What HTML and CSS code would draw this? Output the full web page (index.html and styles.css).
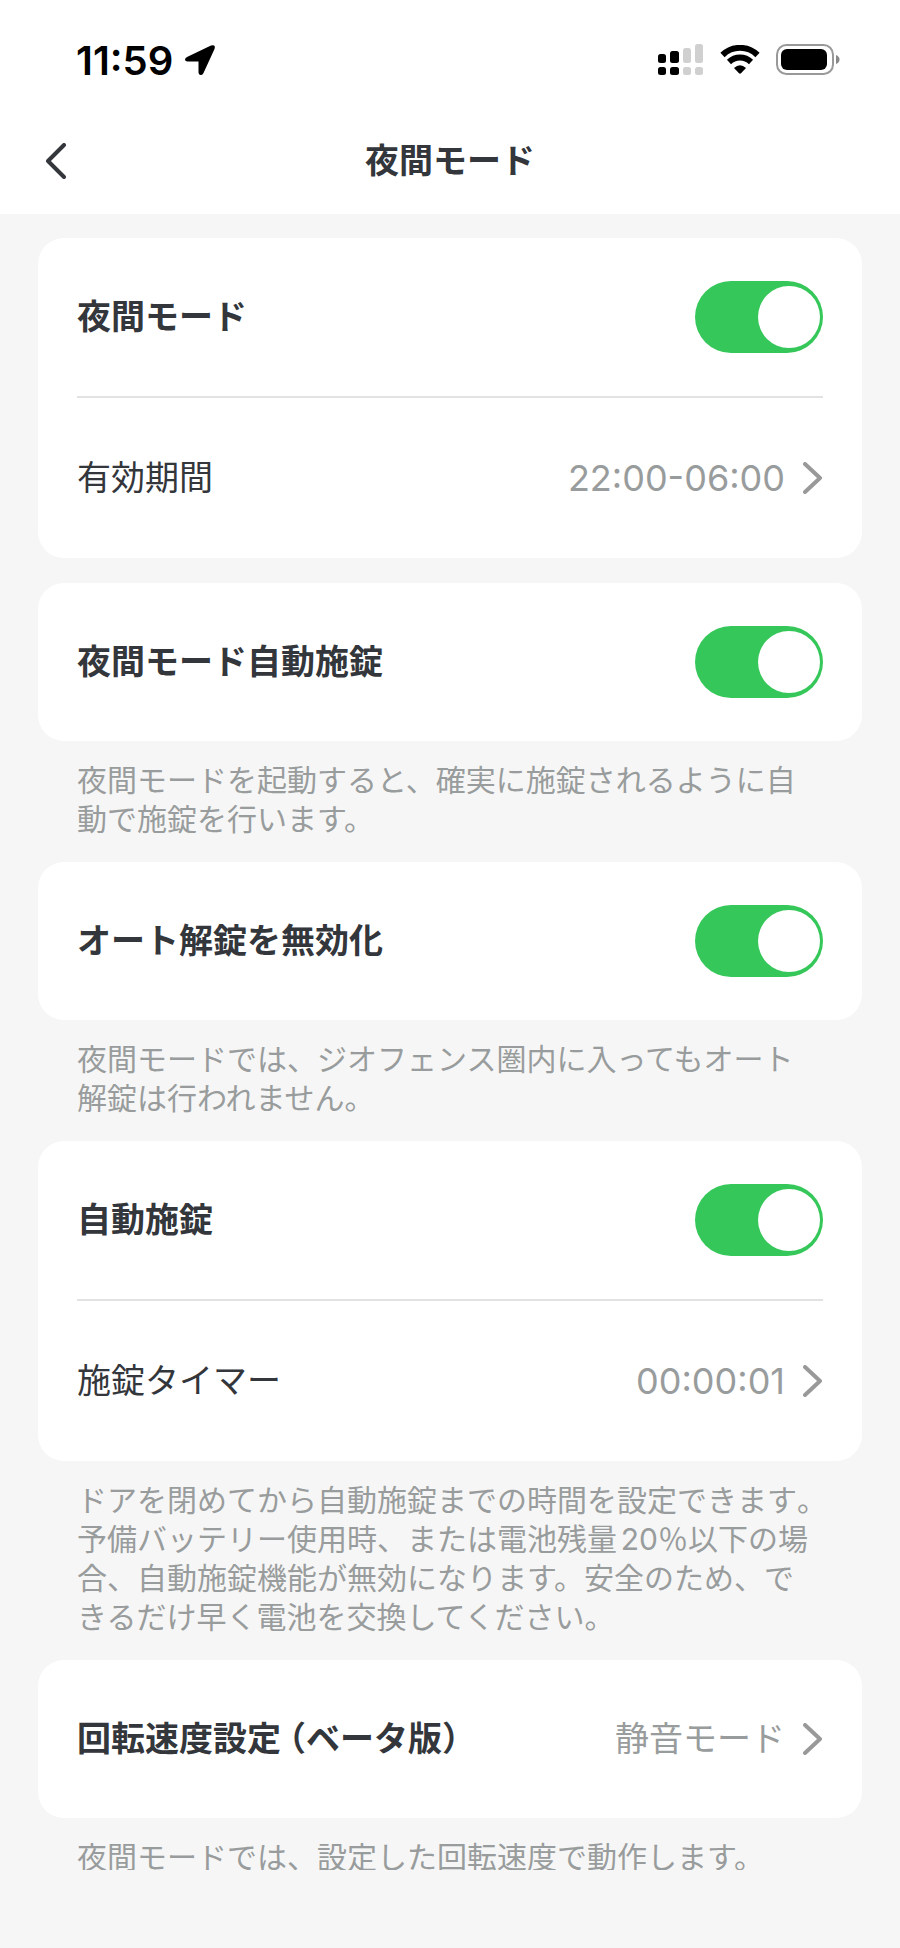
FILE: index.html
```html
<!DOCTYPE html>
<html lang="ja">
<head>
  <meta charset="UTF-8">
  <meta name="viewport" content="width=device-width, initial-scale=1.0">
  <title>夜間モード</title>
  <link rel="stylesheet" href="styles.css">
</head>
<body>
  <div class="status-bar">
    <div class="status-left">
      <span class="time">11:59</span>
      <svg class="location" width="32" height="32" viewBox="0 0 32 32" aria-hidden="true">
        <path d="M3 13 L27 1.500 Q32 0 30.500 5 L19.500 29 Q18.500 31.500 16.500 31 Q14.500 30.500 14.500 28.500 V17.500 H3.500 Q1 17.500 1 15.500 Q1 14 3 13 Z" fill="#000"/>
      </svg>
    </div>
    <div class="status-right">
      <svg width="46" height="32" viewBox="0 0 46 32" aria-hidden="true">
        <g fill="#000">
          <rect x="0" y="10" width="8" height="9" rx="2.500"/>
          <rect x="12" y="7" width="9" height="12" rx="2.500"/>
          <rect x="0" y="23" width="8" height="8" rx="2.500"/>
          <rect x="12" y="23" width="9" height="8" rx="2.500"/>
        </g>
        <g fill="#d0d0d0">
          <rect x="25" y="4" width="8" height="15" rx="2.500"/>
          <rect x="37" y="0" width="8" height="19" rx="2.500"/>
          <rect x="25" y="23" width="8" height="8" rx="2.500"/>
          <rect x="37" y="23" width="8" height="8" rx="2.500"/>
        </g>
      </svg>
      <svg width="40" height="30" viewBox="0 0 40 30" aria-hidden="true">
        <g fill="none" stroke="#000" stroke-width="6">
          <path d="M2.500 10 A25 25 0 0 1 37.500 10"/>
          <path d="M9 17 A16 16 0 0 1 31 17"/>
        </g>
        <path d="M14 23 Q20 17.500 26 23 L21 28.300 Q20 29.200 19 28.300 Z" fill="#000"/>
      </svg>
      <svg width="64" height="32" viewBox="0 0 64 32" aria-hidden="true">
        <rect x="1" y="1" width="56" height="29" rx="9.500" fill="none" stroke="#999" stroke-width="2"/>
        <rect x="5" y="5" width="46" height="21" rx="6" fill="#000"/>
        <path d="M60 11 Q63.500 12.500 63.500 15.500 Q63.500 18.500 60 20 Z" fill="#888"/>
      </svg>
    </div>
  </div>

  <header class="nav-bar">
    <button class="back" type="button" aria-label="戻る">
      <svg width="20" height="36" viewBox="0 0 20 36" aria-hidden="true">
        <path d="M18 2 L2 18 L18 34"/>
      </svg>
    </button>
    <h1>夜間モード</h1>
  </header>

  <main>
    <section class="group">
      <div class="card">
        <div class="row">
          <label class="title" for="night-mode">夜間モード</label>
          <input class="switch" type="checkbox" id="night-mode" checked>
        </div>
        <a class="row" href="#period">
          <span class="label">有効期間</span>
          <span class="value number">22:00-06:00</span>
          <svg class="chevron" width="20" height="32" viewBox="0 0 20 32" aria-hidden="true"><path d="M2 2 L17 16 L2 30"/></svg>
        </a>
      </div>
    </section>

    <section class="group">
      <div class="card">
        <div class="row">
          <label class="title" for="night-lock">夜間モード自動施錠</label>
          <input class="switch" type="checkbox" id="night-lock" checked>
        </div>
      </div>
      <p class="note">夜間モードを起動すると、確実に施錠されるように自動で施錠を行います。</p>
    </section>

    <section class="group">
      <div class="card">
        <div class="row">
          <label class="title" for="no-auto-unlock">オート解錠を無効化</label>
          <input class="switch" type="checkbox" id="no-auto-unlock" checked>
        </div>
      </div>
      <p class="note">夜間モードでは、ジオフェンス圏内に入ってもオート解錠は行われません。</p>
    </section>

    <section class="group">
      <div class="card">
        <div class="row">
          <label class="title" for="auto-lock">自動施錠</label>
          <input class="switch" type="checkbox" id="auto-lock" checked>
        </div>
        <a class="row" href="#timer">
          <span class="label">施錠タイマー</span>
          <span class="value number">00:00:01</span>
          <svg class="chevron" width="20" height="32" viewBox="0 0 20 32" aria-hidden="true"><path d="M2 2 L17 16 L2 30"/></svg>
        </a>
      </div>
      <p class="note">ドアを閉めてから自動施錠までの時間を設定できます<span class="half">。</span>予備バッテリー使用時、または電池残量20％以下の場合、自動施錠機能が無効になります。安全のため、できるだけ早く電池を交換してください。</p>
    </section>

    <section class="group">
      <div class="card">
        <a class="row" href="#speed">
          <span class="title">回転速度設定<span class="half paren">（</span>ベータ版<span class="half">）</span></span>
          <span class="value">静音モード</span>
          <svg class="chevron" width="20" height="32" viewBox="0 0 20 32" aria-hidden="true"><path d="M2 2 L17 16 L2 30"/></svg>
        </a>
      </div>
      <p class="note">夜間モードでは、設定した回転速度で動作します。</p>
    </section>
  </main>

  <div class="home-area"></div>
</body>
</html>
```

FILE: styles.css
```css
* {
  box-sizing: border-box;
}
body {
  display: flex;
  flex-direction: column;
  height: 100vh;
  margin: 0;
  background: #f6f6f6;
  color: #33363b;
  font-family: Inter, "Noto Sans CJK JP", sans-serif;
  font-size: 34px;
}

/* status bar */
.status-bar {
  display: flex;
  align-items: center;
  justify-content: space-between;
  flex: none;
  height: 108px;
  padding: 12px 60px 0 76px;
  background: #fff;
}
.status-left {
  display: flex;
  align-items: center;
  gap: 11px;
}
.status-right {
  display: flex;
  align-items: center;
  gap: 16px;
}
.time {
  color: #000;
  font-size: 40px;
  font-weight: 600;
}

/* nav bar */
.nav-bar {
  display: grid;
  grid-template-columns: 72px 1fr 72px;
  align-items: center;
  flex: none;
  height: 106px;
  background: #fff;
}
.back {
  display: flex;
  justify-content: flex-end;
  padding: 0 6px 0 0;
  border: none;
  background: none;
  cursor: pointer;
}
.back path {
  fill: none;
  stroke: #33363b;
  stroke-width: 4;
  stroke-linecap: round;
  stroke-linejoin: round;
}
h1 {
  margin: 0;
  font-size: 34px;
  font-weight: 600;
  line-height: 48px;
  text-align: center;
}

/* settings list */
main {
  flex: 1;
  min-height: 0;
  padding: 24px 38px 0;
  overflow-y: auto;
  scrollbar-width: none;
}
.card {
  padding: 0 39px;
  border-radius: 26px;
  background: #fff;
}
.card:last-child {
  margin-bottom: 25px;
}
.row {
  display: flex;
  align-items: center;
  height: 158px;
  color: inherit;
  line-height: 48px;
  text-decoration: none;
}
.row + .row {
  height: 162px;
  border-top: 2px solid #e2e2e2;
}
.title,
.label {
  flex: 1;
}
.title {
  font-weight: 600;
}
.value {
  color: #999c9c;
}
.number {
  font-size: 36px;
}
.chevron {
  margin-left: 18px;
  fill: none;
  stroke: #999;
  stroke-width: 4;
  stroke-linecap: round;
  stroke-linejoin: round;
}
.note {
  margin: 0;
  padding: 20px 39px 23px;
  color: #999c9c;
  font-size: 30px;
  line-height: 39px;
  text-autospace: normal;
}

/* punctuation set at half width */
.half {
  font-feature-settings: "halt";
}
.paren {
  margin-left: 8px;
}

/* toggle */
.switch {
  appearance: none;
  display: flex;
  align-items: center;
  justify-content: flex-end;
  width: 128px;
  height: 72px;
  margin: 0;
  padding: 0 3px;
  border-radius: 36px;
  background: #d8d8d8;
  cursor: pointer;
}
.switch::before {
  content: "";
  width: 62px;
  height: 62px;
  border-radius: 50%;
  background: #fff;
}
.switch:checked {
  background: #35c759;
}
.switch:not(:checked) {
  justify-content: flex-start;
}

.home-area {
  flex: none;
  height: 78px;
}
```
